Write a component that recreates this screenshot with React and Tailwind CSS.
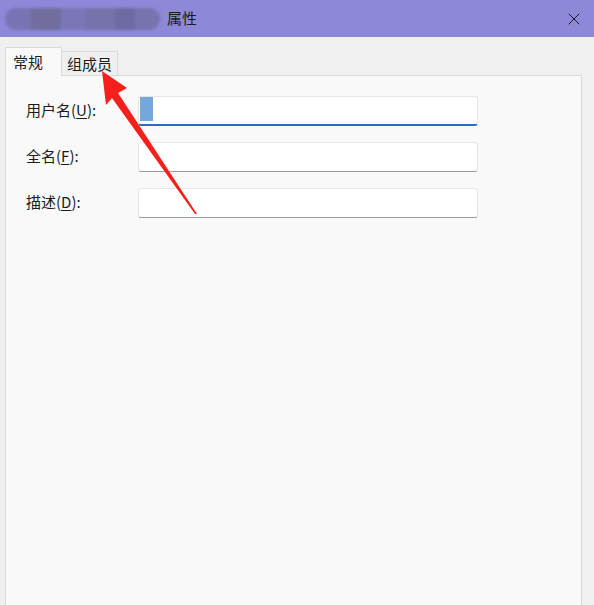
import { X } from "lucide-react";

const cjk = { fontFamily: '"Microsoft YaHei", "Noto Sans CJK SC", "Noto Sans", sans-serif' };

function Field({ label, accel, rest, active }) {
  return (
    <div className="flex items-center h-[30px]">
      <div className="w-[132px] shrink-0 pl-[20px] text-[15px] text-[#1b1b1b] -mt-[2px]">
        {label}(<span className="underline underline-offset-2">{accel}</span>){rest}
      </div>
      <div
        className={`w-[340px] h-[30px] bg-white border border-[#e6e6e6] rounded-[3px] flex items-start pl-[1px] ${
          active ? "border-b-2 border-b-[#2a6ccb]" : "border-b border-b-[#9b9b9b]"
        }`}
      >
        {active && <span className="w-[13px] h-[24px] bg-[#74a7da] blur-[0.5px]" />}
      </div>
    </div>
  );
}

export default function App() {
  return (
    <div className="relative w-[594px] h-[605px] overflow-hidden bg-[#f0f0f0] flex flex-col" style={cjk}>
      {/* title bar */}
      <div className="h-[37px] bg-[#8d89d8] flex items-center shrink-0">
        <div className="ml-[5px] w-[155px] h-[22px] flex blur-[1.5px] rounded-full overflow-hidden">
          <div className="w-[26px] bg-[#7874b4]" />
          <div className="w-[30px] bg-[#716d9e]" />
          <div className="w-[24px] bg-[#7a76b8]" />
          <div className="w-[30px] bg-[#7672aa]" />
          <div className="w-[20px] bg-[#6e6aa2]" />
          <div className="w-[25px] bg-[#7773ae]" />
        </div>
        <span className="ml-[7px] text-[15px] text-[#1b1b1b]">属性</span>
        <X className="ml-auto mr-[10px] text-[#1b1b1b]" size={20} strokeWidth={1.2} />
      </div>

      {/* tabs */}
      <div className="flex items-end pl-[5px] pt-[10px] shrink-0">
        <div className="relative z-10 h-[29px] w-[57px] bg-[#f9f9f9] border border-b-0 border-[#dadada] pl-[7px] pt-[3px] text-[15px] text-[#1b1b1b] -mb-px">
          常规
        </div>
        <div className="h-[24px] w-[56px] bg-[#f0f0f0] border border-l-0 border-b-0 border-[#dadada] pl-[5px] pt-[1px] text-[15px] text-[#1b1b1b] leading-[22px]">
          组成员
        </div>
      </div>

      {/* panel */}
      <div className="flex-1 ml-[5px] w-[577px] bg-[#f9f9f9] border border-b-0 border-[#dadada] pt-[20px] flex flex-col gap-[16px]">
        <Field label="用户名" accel="U" rest=":" active />
        <Field label="全名" accel="F" rest=":" />
        <Field label="描述" accel="D" rest=":" />
      </div>

      {/* annotation arrow */}
      <svg className="absolute left-0 top-0 pointer-events-none" width="594" height="605">
        <polygon
          points="102,71 127,88 118,93 197,214 195,214 112,98 106,105"
          fill="#f5201c"
        />
      </svg>
    </div>
  );
}
